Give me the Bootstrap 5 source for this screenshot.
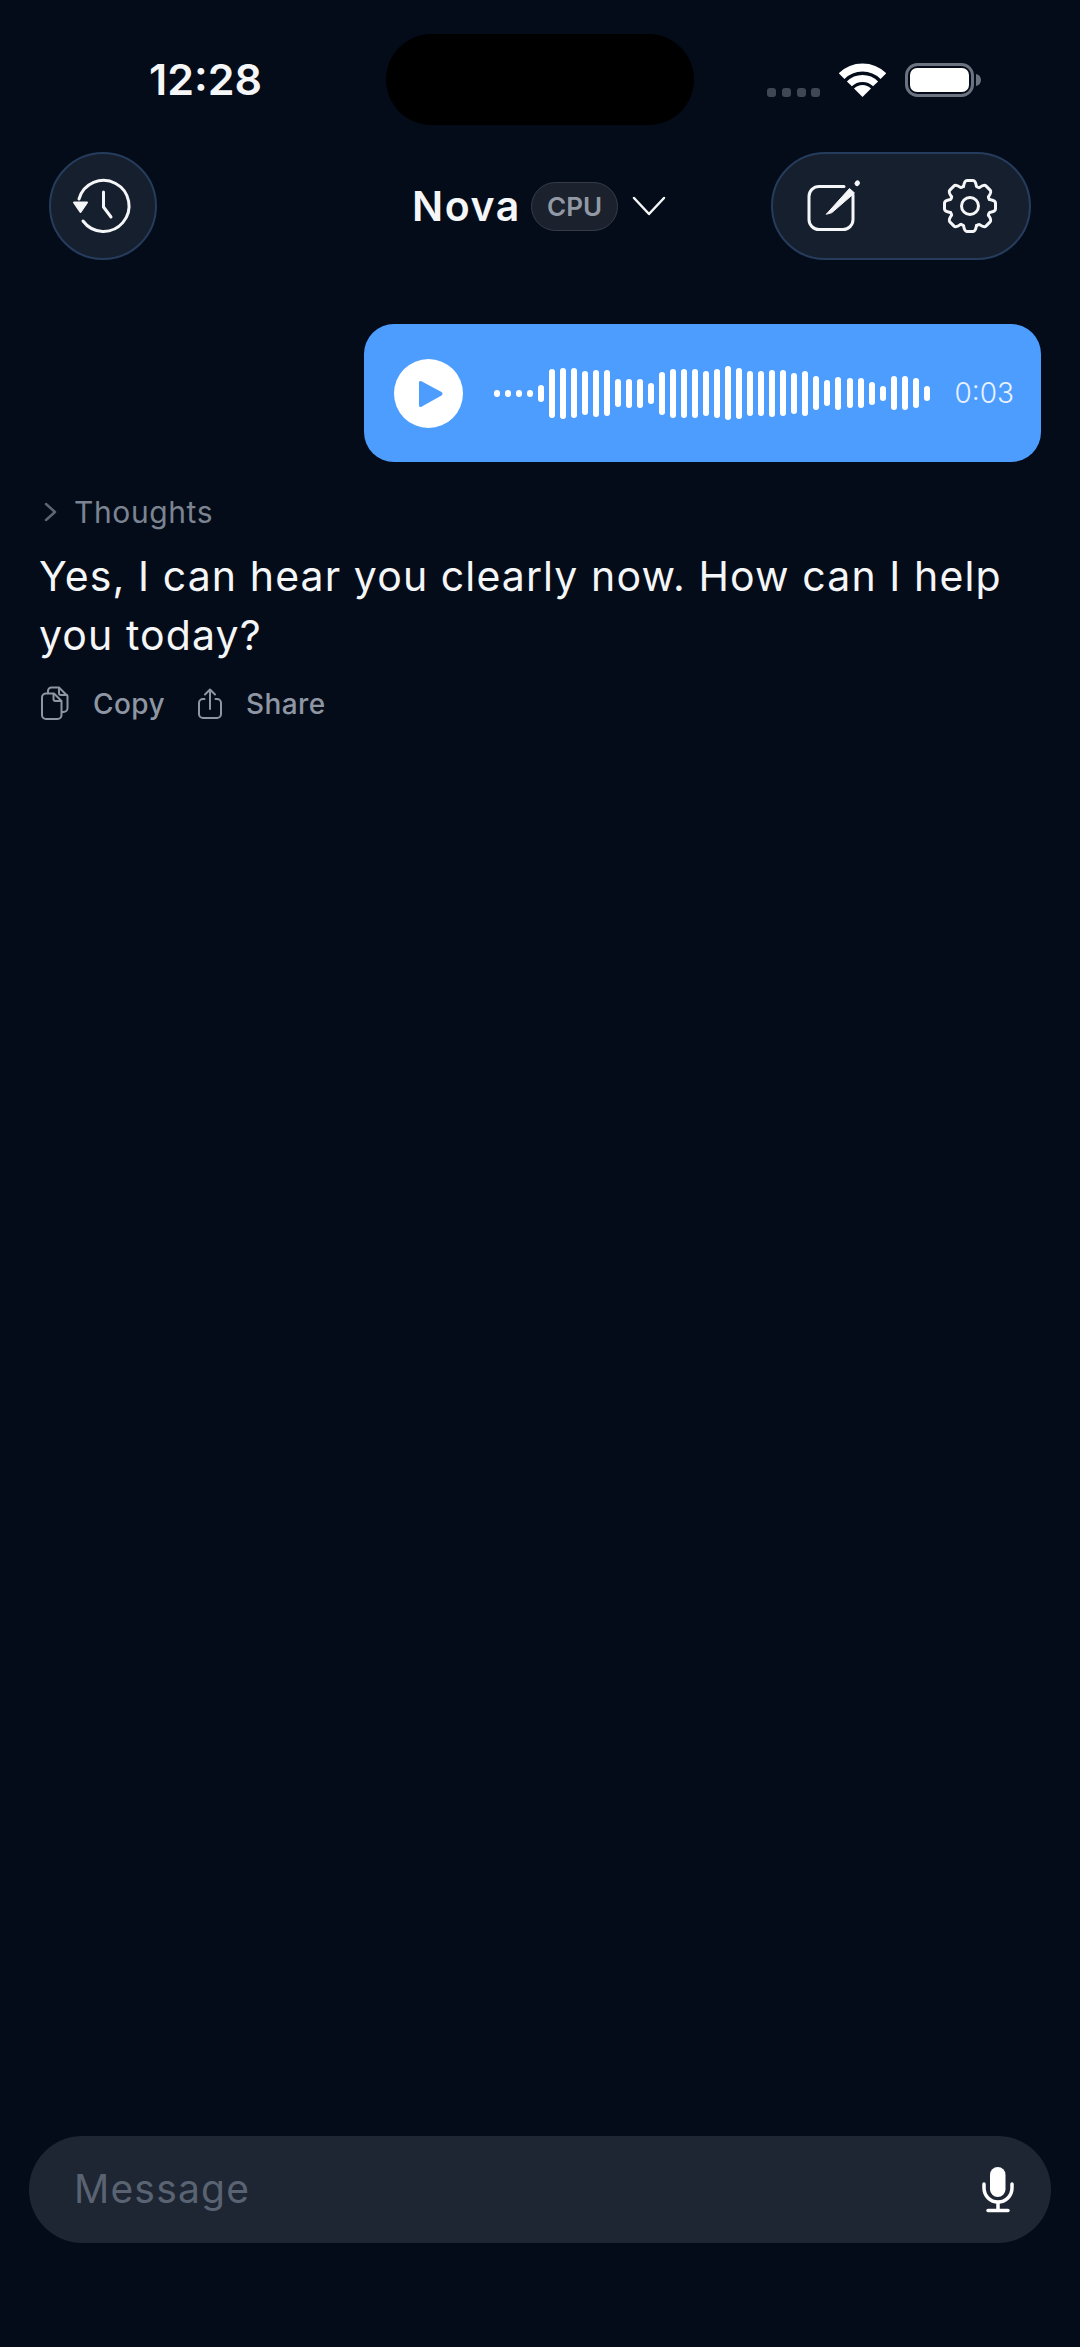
<!DOCTYPE html>
<html lang="en">
<head>
  <meta charset="UTF-8" />
  <meta name="viewport" content="width=device-width, initial-scale=1.0"/>
  <title>Nova</title>
  <link href="https://cdn.jsdelivr.net/npm/bootstrap@5.3.3/dist/css/bootstrap.min.css" rel="stylesheet"/>
  <style>
    body {
      font-family: Inter, "Liberation Sans", sans-serif;
      background: #040c19;
      color: #f5f6f8;
      min-height: 100vh;
    }
    svg { display: block; flex: none; }
    .status-row {
      height: 91px;
      margin-top: 34px;
      padding-left: 149px;
    }
    .clock {
      width: 237px;
      font-size: 43px;
      font-weight: 600;
      line-height: 1;
    }
    .island {
      width: 308px;
      height: 91px;
      border-radius: 46px;
      background: #000;
    }
    .signal { margin-left: 73px; gap: 5.8px; width: 72px; height: 34px; }
    .signal i { width: 9px; height: 9px; border-radius: 3px; background: #3f4754; }
    .battery-icon { margin-left: 19px; }
    .top-row {
      height: 108px;
      margin-top: 27px;
      padding: 0 49px;
    }
    .round-btn, .tool-pill {
      height: 108px;
      background: #161f2e;
      border: 2px solid #263c5c;
    }
    .round-btn { width: 108px; border-radius: 50%; }
    .tool-pill { width: 260px; border-radius: 54px; padding-left: 33px; gap: 80px; }
    .title-group { margin-left: 255px; }
    .model-name { font-size: 41px; font-weight: 600; letter-spacing: 1.600px; line-height: 1; }
    .cpu-tag {
      width: 87px;
      height: 49px;
      margin-left: 10px;
      margin-right: 14px;
      background: #1b212d;
      border: 1.5px solid #363d49;
      font-size: 26px;
      font-weight: 600;
      color: #9299a5;
    }
    .voice-bubble {
      width: 677px;
      height: 138px;
      margin: 64px 39px 0 auto;
      padding: 0 27px 0 30px;
      border-radius: 30px;
      background: #4d9dff;
    }
    .play-dot { width: 69px; height: 69px; border-radius: 50%; background: #fff; }
    .wave { margin-left: 31px; gap: 5.03px; }
    .wave span { width: 6px; border-radius: 3px; background: #fff; }
    .voice-time { font-size: 28px; font-weight: 300; color: #e8f2ff; line-height: 1; }
    .reply { padding: 0 39px; margin-top: 33px; }
    .thoughts-row { height: 34px; margin-left: 5px; gap: 17px; font-size: 30px; color: #7c8491; letter-spacing: .6px; line-height: 1; }
    .reply-text { font-size: 41px; line-height: 59px; margin: 18px 0 0; letter-spacing: 1.100px; width: 1000px; color: #f5f6f8; }
    .reply-tools { margin-top: 21px; margin-left: 1px; color: #8f96a3; font-size: 28px; font-weight: 500; line-height: 1; letter-spacing: .4px; }
    .reply-tools .tool-item { gap: 23px; }
    .reply-tools .tool-item + .tool-item { margin-left: 32px; }
    .composer {
      height: 107px;
      margin: auto 29px 104px;
      padding: 0 37px 0 45px;
      border-radius: 54px;
      background: #1e2633;
      color: #5a6372;
      font-size: 39px;
      letter-spacing: 1.200px;
    }
  </style>
</head>
<body class="d-flex flex-column">

  <!-- Status bar -->
  <div class="status-row d-flex align-items-center">
    <div class="clock">12:28</div>
    <div class="island"></div>
    <div class="signal d-flex align-items-end">
      <i></i><i></i><i></i><i></i>
    </div>
    <svg width="47" height="36" viewBox="838 62 47 36">
      <path d="M840.600 76.100A29.500 29.500 0 0 1 882.400 76.100" fill="none" stroke="#fff" stroke-width="8"/>
      <path d="M848.400 83.900A18.500 18.500 0 0 1 874.600 83.900" fill="none" stroke="#fff" stroke-width="7"/>
      <path d="M861.500 97L853 88.500A12 12 0 0 1 870 88.500Z" fill="#fff"/>
    </svg>
    <svg class="battery-icon" width="77" height="36" viewBox="904 61 77 36">
      <rect x="905.500" y="63.500" width="66" height="31" rx="11" fill="none" stroke="#6b7280" stroke-width="3"/>
      <rect x="909" y="67" width="59" height="24" rx="7" fill="#fff"/>
      <path d="M975 73c3 .6 5 3 5 6s-2 5.400-5 6z" fill="#6b7280"/>
    </svg>
  </div>

  <!-- Header -->
  <div class="top-row d-flex align-items-center">
    <button class="round-btn d-flex align-items-center justify-content-center p-0" type="button" aria-label="History">
      <svg width="68" height="64" viewBox="68 174 68 64" fill="none" stroke="#f5f6f8" stroke-width="3" stroke-linecap="round" stroke-linejoin="round">
        <path d="M78 199A25.500 25.500 0 1 1 82 221"/>
        <path d="M102.500 192V207L110 217"/>
        <path d="M73 202.500H86L79.500 212Z" fill="#f5f6f8" stroke-width="2"/>
      </svg>
    </button>
    <div class="title-group d-flex align-items-center">
      <span class="model-name">Nova</span>
      <span class="cpu-tag rounded-pill d-flex align-items-center justify-content-center">CPU</span>
      <svg width="34" height="20" viewBox="631 196 34 20" fill="none" stroke="#f5f6f8" stroke-width="2.500" stroke-linecap="round" stroke-linejoin="round">
        <path d="M633 198L648 214L663 198"/>
      </svg>
    </div>
    <div class="tool-pill d-flex align-items-center ms-auto">
      <svg width="56" height="54" viewBox="805 182 56 54" fill="none" stroke="#f5f6f8" stroke-width="3" stroke-linecap="round" stroke-linejoin="round">
        <path d="M843 189.500H818a10 10 0 0 0 -10 10V222.500a10 10 0 0 0 10 10H842a10 10 0 0 0 10 -10V198"/>
        <path d="M825.500 217L848.500 191.500L853.500 196L831 215.500Z" fill="#f5f6f8" stroke-width="1"/>
        <path d="M856 186.500L856.500 186" stroke-width="5"/>
      </svg>
      <svg width="56" height="56" viewBox="-28 -28 56 56" fill="none" stroke="#f5f6f8" stroke-width="3" stroke-linecap="round" stroke-linejoin="round">
        <defs>
          <path id="gearTooth" d="M-6.500 -19.500Q-5.500 -25.500 -3 -25.500H3Q5.500 -25.500 6.500 -19.500Q7.600 -18.500 9.200 -18.400"/>
        </defs>
        <use href="#gearTooth"/>
        <use href="#gearTooth" transform="rotate(45)"/>
        <use href="#gearTooth" transform="rotate(90)"/>
        <use href="#gearTooth" transform="rotate(135)"/>
        <use href="#gearTooth" transform="rotate(180)"/>
        <use href="#gearTooth" transform="rotate(225)"/>
        <use href="#gearTooth" transform="rotate(270)"/>
        <use href="#gearTooth" transform="rotate(315)"/>
        <circle r="8.500"/>
      </svg>
    </div>
  </div>

  <!-- Voice message -->
  <div class="voice-bubble d-flex align-items-center">
    <div class="play-dot d-flex align-items-center justify-content-center">
      <svg width="69" height="69" viewBox="394 358.500 69 69">
        <path d="M421 380.500L441.500 391.500a2 2 0 0 1 0 3.500L421 406.500a1.500 1.500 0 0 1 -2 -1.500V382a1.500 1.500 0 0 1 2 -1.500Z" fill="#4d9dff"/>
      </svg>
    </div>
    <div class="wave d-flex align-items-center" id="wave"></div>
    <div class="voice-time ms-auto">0:03</div>
  </div>

  <!-- Reply -->
  <div class="reply">
    <div class="thoughts-row d-flex align-items-center">
      <svg width="13" height="20" viewBox="0 0 13 20" fill="none" stroke="#5d6572" stroke-width="2.500" stroke-linecap="round" stroke-linejoin="round">
        <path d="M2 2L11 10L2 18"/>
      </svg>
      <span>Thoughts</span>
    </div>
    <p class="reply-text">Yes, I can hear you clearly now. How can I help you today?</p>
    <div class="reply-tools d-flex align-items-center">
      <div class="tool-item d-flex align-items-center">
        <svg width="30" height="36" viewBox="42 686 30 36" fill="none" stroke="#8f96a3" stroke-width="2" stroke-linecap="round" stroke-linejoin="round">
          <path d="M48 693.500H56L63.500 701V715a4 4 0 0 1 -4 4H48a4 4 0 0 1 -4 -4V697.500a4 4 0 0 1 4 -4Z"/>
          <path d="M55.500 694V699a2 2 0 0 0 2 2H63"/>
          <path d="M50 693V691a3.500 3.500 0 0 1 3.500 -3.500H61L69.500 696V708a4 4 0 0 1 -4 4H64"/>
          <path d="M61 688V693a2 2 0 0 0 2 2H69"/>
        </svg>
        <span>Copy</span>
      </div>
      <div class="tool-item d-flex align-items-center">
        <svg width="26" height="32" viewBox="197 687 26 32" fill="none" stroke="#8f96a3" stroke-width="2" stroke-linecap="round" stroke-linejoin="round">
          <path d="M204.500 698H203a4 4 0 0 0 -4 4V713a4 4 0 0 0 4 4H217a4 4 0 0 0 4 -4V702a4 4 0 0 0 -4 -4H215.500"/>
          <path d="M210 708V689M205 693.500L210 688.500L215 693.500"/>
        </svg>
        <span>Share</span>
      </div>
    </div>
  </div>

  <!-- Message box -->
  <div class="composer d-flex align-items-center justify-content-between">
    <span>Message</span>
    <svg width="32" height="46" viewBox="981 2167 32 46" fill="none" stroke="#fff" stroke-width="3.500" stroke-linecap="round">
      <rect x="989" y="2167" width="15.500" height="30" rx="7.750" fill="#fff" stroke="none"/>
      <path d="M983 2184V2188a14 14 0 0 0 28 0V2184"/>
      <path d="M997 2203V2210M987 2210.500H1007"/>
    </svg>
  </div>

  <script src="https://cdn.jsdelivr.net/npm/bootstrap@5.3.3/dist/js/bootstrap.bundle.min.js"></script>
  <script>
    const barHeights = [7, 7, 7, 7, 17, 49, 51, 50, 44, 47, 46, 28, 29, 29, 21, 43, 49, 49, 49, 45,
      49, 54, 51, 45, 45, 47, 46, 41, 45, 34, 26, 33, 30, 30, 23, 15, 34, 34, 30, 15];
    const wave = document.getElementById('wave');
    barHeights.forEach(function (h) {
      const bar = document.createElement('span');
      bar.style.height = h + 'px';
      wave.appendChild(bar);
    });
  </script>
</body>
</html>
